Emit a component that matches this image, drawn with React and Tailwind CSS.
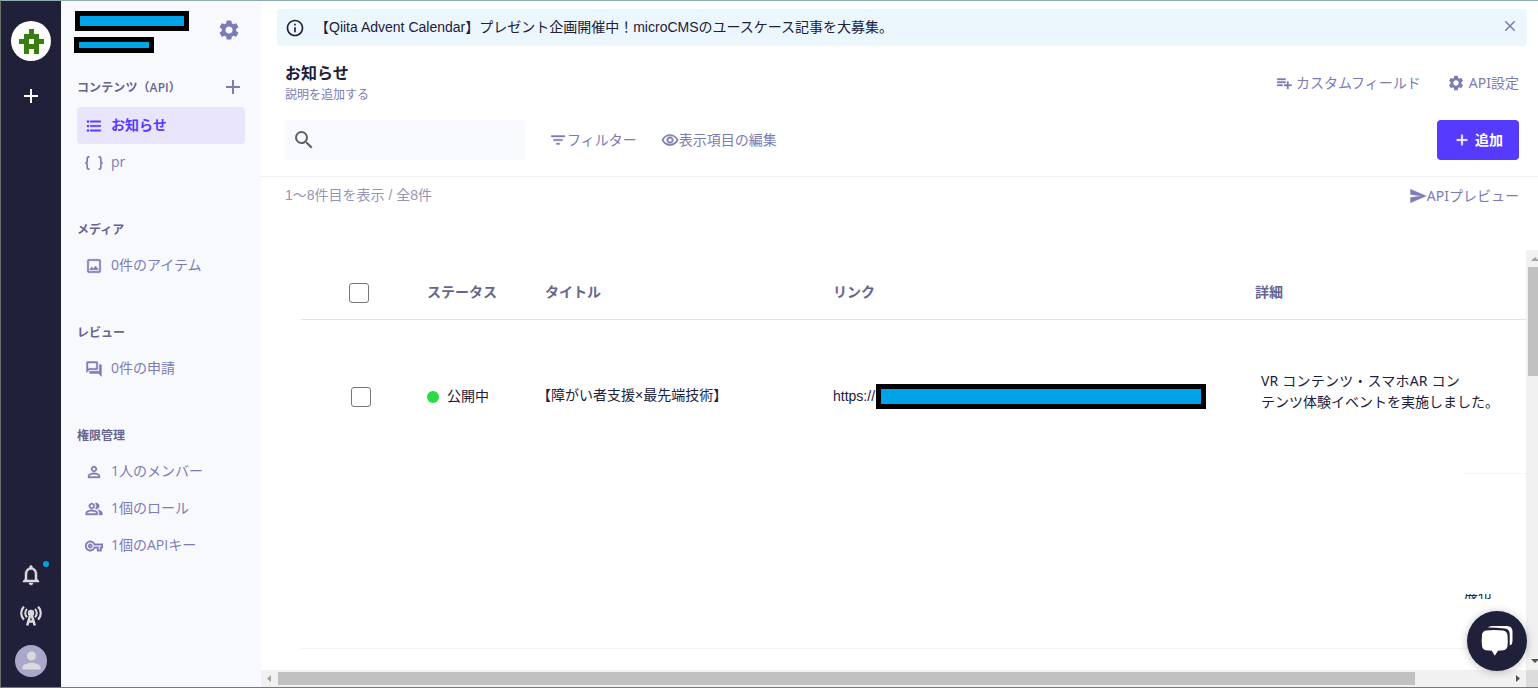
import {
  MdAdd,
  MdClose,
  MdFilterList,
  MdFormatListBulleted,
  MdInfoOutline,
  MdNotificationsNone,
  MdOutlineImage,
  MdOutlinePeopleAlt,
  MdOutlineQuestionAnswer,
  MdOutlineRemoveRedEye,
  MdOutlineVpnKey,
  MdPerson,
  MdPersonOutline,
  MdPlaylistAdd,
  MdSearch,
  MdSend,
  MdSettings,
} from "react-icons/md";

// slightly heavier icons, without an outline on their empty bounding path
const smallIcon = "size-[18px] shrink-0 stroke-[0.5] [&>[fill=none]]:hidden";

const groups = [
  {
    title: "メディア",
    items: [{ icon: MdOutlineImage, label: "0件のアイテム" }],
  },
  {
    title: "レビュー",
    items: [{ icon: MdOutlineQuestionAnswer, label: "0件の申請" }],
  },
  {
    title: "権限管理",
    items: [
      { icon: MdPersonOutline, label: "1人のメンバー" },
      { icon: MdOutlinePeopleAlt, label: "1個のロール" },
      { icon: MdOutlineVpnKey, label: "1個のAPIキー" },
    ],
  },
];

function Logo() {
  return (
    <svg width="40" height="40" viewBox="0 0 40 40" shapeRendering="crispEdges">
      <circle cx="20" cy="20" r="20" fill="#fff" shapeRendering="auto" />
      <path
        fill="#37800d"
        fillRule="evenodd"
        d="M18 8h5v5h5v5h5v5h-5v10h-5v-5h-5v5h-5V23H8v-5h5v-5h5zM18 18v5h5v-5z"
      />
    </svg>
  );
}

function AntennaIcon() {
  return (
    <svg width="22" height="20" viewBox="0 0 22 20" fill="none" stroke="#d9d9de">
      <circle cx="11" cy="7" r="3.2" fill="#d9d9de" stroke="none" />
      <path strokeWidth="2.6" d="M10.6 8 7.2 19.5M11.4 8l3.4 11.5M8.5 15.5h5" />
      <path strokeWidth="2" d="M7 3a5.6 5.6 0 0 0 0 8.2M15 3a5.6 5.6 0 0 1 0 8.2" />
      <path strokeWidth="2.2" d="M3.9.6a9.2 9.2 0 0 0 0 13M18.1.6a9.2 9.2 0 0 1 0 13" />
    </svg>
  );
}

function BracesIcon() {
  return (
    <svg width="18" height="14" viewBox="0 0 18 14" fill="none" stroke="#7d7bb5" strokeWidth="1.7">
      <path d="M4.500.8H3.900C2.700.8 2.200 1.400 2.200 2.500V5c0 1.300-.6 2-1.900 2 1.300 0 1.900.7 1.900 2v2.500c0 1.100.5 1.700 1.700 1.700h.6" />
      <path d="M13.500.8h.6c1.200 0 1.700.6 1.700 1.700V5c0 1.300.6 2 1.900 2-1.300 0-1.900.7-1.900 2v2.500c0 1.100-.5 1.700-1.700 1.700h-.6" />
    </svg>
  );
}

function ChatIcon() {
  return (
    <svg width="32" height="32" viewBox="0 0 32 32">
      <path
        fill="#fff"
        d="M7 2.600Q8 1.200 11 1h15q5 .2 5.500 5v10q0 3.200-2 4.300l-.8-.2V9q-.3-5-5-5.400-8-1-16.700-1z"
      />
      <path
        fill="#fff"
        d="M5 5.500Q13.500 4.500 22 5.500q4 .5 4.500 4.500.5 5.500 0 11-.3 3.500-4 4.200l-5.500.5-3.200 5-3-5-5.800-.5q-3.700-.7-4-4.200-.6-5.500 0-11 .3-4 4-4.500z"
      />
    </svg>
  );
}

function Rail() {
  return (
    <nav className="flex w-[60px] shrink-0 flex-col items-center bg-[#21203b] pt-5">
      <Logo />
      <MdAdd className="mt-[23px] size-6 text-white" />
      <div className="relative mt-auto">
        <MdNotificationsNone className="size-6 stroke-[0.5] text-[#d9d9de] [&>[fill=none]]:hidden" />
        <span className="absolute -top-[2px] left-[24px] size-1.5 rounded-full bg-[#00a0d8]" />
      </div>
      <div className="mt-[19px]">
        <AntennaIcon />
      </div>
      <div className="mt-[19px] mb-2.5 flex size-8 items-center justify-center rounded-full bg-[#a9a8c8]">
        <MdPerson className="mb-0.5 size-[27px] text-[#dad9de]" />
      </div>
    </nav>
  );
}

function Sidebar() {
  return (
    <aside className="w-[200px] shrink-0 bg-[#f8f9fd] px-4 font-['Open_Sans','Noto_Sans_CJK_JP',sans-serif] text-[#7d7bb5]">
      <div className="flex h-[70px] justify-between pt-2.5">
        <div className="-ml-[3px]">
          <div className="ml-px h-5 w-[114px] border-[5px] border-black bg-[#00a2e8]" />
          <div className="mt-1.5 h-4 w-20 border-[5px] border-black bg-[#00a2e8]" />
        </div>
        <MdSettings className="mt-[7px] mr-1 size-6" />
      </div>

      <div className="flex h-9 items-center justify-between pb-1">
        <h2 className="pt-px text-xs font-semibold tracking-[0.1px] text-[#67658f]">
          コンテンツ（API）
        </h2>
        <MdAdd className="size-6" />
      </div>
      <div className="flex h-[37px] items-center rounded bg-[#e8e5fd] pl-2 text-sm font-semibold text-[#563bff]">
        <MdFormatListBulleted className={smallIcon} />
        <span className="ml-2 pb-0.5">お知らせ</span>
      </div>
      <div className="flex h-[37px] items-center pl-2 text-sm">
        <BracesIcon />
        <span className="ml-2 pb-0.5">pr</span>
      </div>

      {groups.map((group) => (
        <div key={group.title} className="mt-[30px]">
          <h2 className="flex h-9 items-center pt-0.5 text-xs font-semibold text-[#67658f]">
            {group.title}
          </h2>
          {group.items.map(({ icon: Icon, label }) => (
            <div key={label} className="flex h-[37px] items-center pl-2 text-sm">
              <Icon className={smallIcon} />
              <span className="ml-2 pb-0.5">{label}</span>
            </div>
          ))}
        </div>
      ))}
    </aside>
  );
}

function Header() {
  return (
    <header className="h-[131px] border-b border-[#f0f0f6] pr-[19px] pl-6 text-[#7d7bb5]">
      <div className="flex h-[74px] items-start justify-between">
        <div className="pt-[18px]">
          <h1 className="text-base leading-5 font-bold text-[#21203b]">お知らせ</h1>
          <p className="mt-[3px] text-xs leading-4">説明を追加する</p>
        </div>
        <div className="mt-[27px] flex items-center font-['Noto_Sans','Noto_Sans_CJK_JP',sans-serif] text-sm leading-5">
          <MdPlaylistAdd className={smallIcon} />
          <span className="ml-[3px]">カスタムフィールド</span>
          <MdSettings className="ml-[26px] size-[18px]" />
          <span className="ml-1">API設定</span>
        </div>
      </div>
      <div className="flex h-10 items-center text-sm">
        <div className="flex h-10 w-60 items-center rounded bg-[#f8f9fd] pl-[7px]">
          <MdSearch className="size-6 text-[#5f5f66]" />
        </div>
        <div className="ml-6 flex items-center">
          <MdFilterList className={smallIcon} />
          <span>フィルター</span>
        </div>
        <div className="ml-6 flex items-center">
          <MdOutlineRemoveRedEye className={smallIcon} />
          <span>表示項目の編集</span>
        </div>
        <button className="ml-auto flex h-10 w-[82px] items-center rounded bg-[#563bff] pl-4 font-bold text-white">
          <MdAdd className={smallIcon} />
          <span className="ml-1">追加</span>
        </button>
      </div>
    </header>
  );
}

function Checkbox() {
  return <span className="block size-5 rounded-[3px] border border-[#767676] bg-white" />;
}

function Table() {
  return (
    <div className="flex h-[437px] flex-col">
      <div className="flex min-h-0 flex-1">
        <div className="min-w-0 flex-1 pl-10">
          <div className="grid h-[70px] grid-cols-[126px_118px_288px_422px_1fr] items-center border-b border-[#e2e2ee] pt-[15px] text-sm font-semibold text-[#67658f]">
            <div className="pt-px pl-12">
              <Checkbox />
            </div>
            <span>ステータス</span>
            <span>タイトル</span>
            <span>リンク</span>
            <span>詳細</span>
          </div>
          <div className="grid h-[153px] grid-cols-[126px_111px_295px_428px_1fr] items-center text-sm text-[#21203b]">
            <div className="pl-[50px]">
              <Checkbox />
            </div>
            <div className="flex items-center">
              <span className="size-3 rounded-full bg-[#28dc46]" />
              <span className="ml-2 pb-0.5">公開中</span>
            </div>
            <span className="-ml-px pb-1">【障がい者支援×最先端技術】</span>
            <div className="flex items-center">
              <span className="w-[43px] pb-0.5">https://</span>
              <span className="h-[25px] w-[330px] border-[5px] border-black bg-[#00a2e8]" />
            </div>
            <p className="pb-3 font-['Noto_Sans','Noto_Sans_CJK_JP',sans-serif] leading-[21px] whitespace-nowrap">
              <span className="tracking-[0.2px]">VR コンテンツ・スマホAR コン</span>
              <br />
              テンツ体験イベントを実施しました。
            </p>
          </div>
          <div className="flex h-44 flex-col items-end border-b border-[#f3f3f8]">
            <div className="h-[121px] w-[62px] border-t border-[#f6f6fa]" />
            {/* lower edge of a cell that is cut off */}
            <div className="flex h-[5px] w-[62px] items-end overflow-hidden text-sm leading-[10px] text-[#21203b]">
              展布
            </div>
          </div>
        </div>
        <div className="flex w-3 flex-col overflow-hidden bg-[#f1f1f1] pl-0.5">
          <svg width="10" height="17" viewBox="0 0 10 17" className="shrink-0">
            <path fill="#a3a3a3" d="M3 11h8L7 7z" />
          </svg>
          <div className="h-[109px] bg-[#c1c1c1]" />
          <svg width="10" height="17" viewBox="0 0 10 17" className="mt-auto shrink-0">
            <path fill="#505050" d="M3 6h8l-4 4z" />
          </svg>
        </div>
      </div>
      <div className="flex h-[17px] items-center bg-[#f1f1f1]">
        <svg width="17" height="17" viewBox="0 0 17 17">
          <path fill="#a3a3a3" d="M10 5v7L6 8.500z" />
        </svg>
        <div className="h-[13px] w-[1137px] bg-[#c1c1c1]" />
        <svg width="17" height="17" viewBox="0 0 17 17" className="ml-auto">
          <path fill="#505050" d="M7 5v7l4-3.500z" />
        </svg>
        <div className="h-[17px] w-3 bg-[#dcdcdc]" />
      </div>
    </div>
  );
}

export default function App() {
  return (
    <div className="relative h-[692px] w-[1538px] overflow-hidden bg-white font-['Liberation_Sans','Noto_Sans_CJK_JP',sans-serif]">
      <div className="flex h-[688px] border-t border-b border-l border-t-[#8fb0b3] border-b-[#77777a] border-l-[#6c706b]">
        <Rail />
        <Sidebar />
        <main className="min-w-0 flex-1 pt-2">
          <div className="mr-[11px] ml-4 flex h-[37px] items-center rounded bg-[#ebf7fc] pl-2 text-sm text-[#21203b]">
            <MdInfoOutline className="size-5" />
            <span className="ml-2.5 pb-0.5">
              【Qiita Advent Calendar】プレゼント企画開催中！microCMSのユースケース記事を大募集。
            </span>
            <MdClose className="mr-2 mb-1 ml-auto size-[18px] text-[#7d7bb5]" />
          </div>
          <Header />
          <div className="flex h-[73px] items-start justify-between pt-2 pr-[19px] pl-6 text-sm">
            <span className="text-[#9795b5]">1〜8件目を表示 / 全8件</span>
            <div className="flex items-center pt-px font-['Noto_Sans','Noto_Sans_CJK_JP',sans-serif] text-[#7d7bb5]">
              <MdSend className={smallIcon} />
              <span>APIプレビュー</span>
            </div>
          </div>
          <Table />
        </main>
      </div>
      <div className="absolute top-[611px] left-[1467px] flex size-[60px] items-center justify-center rounded-full bg-[#21203b] shadow-[0_1px_8px_rgba(0,0,0,0.25)]">
        <ChatIcon />
      </div>
    </div>
  );
}
